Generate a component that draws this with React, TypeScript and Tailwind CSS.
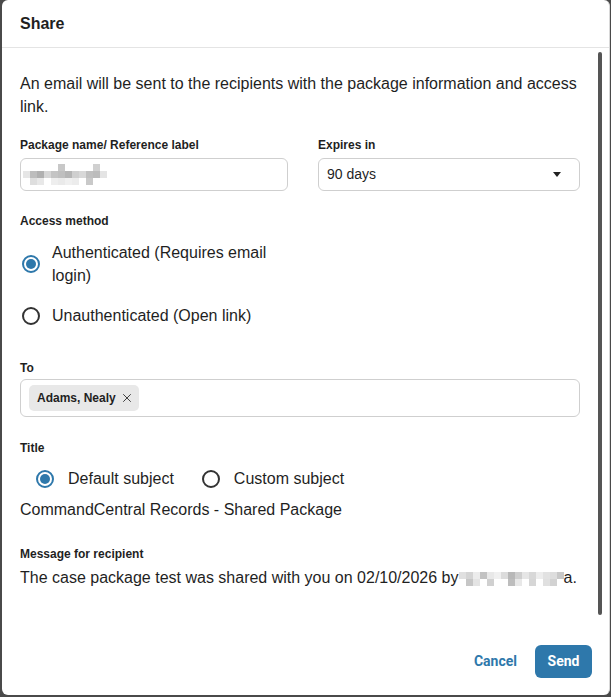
import { X } from "lucide-react";

// Share dialog: package details, access method, recipients, subject and message.

const BLUE = "#2e78ab";

function Radio({ checked }: { checked?: boolean }) {
  return checked ? (
    <span className="flex h-[18px] w-[18px] shrink-0 items-center justify-center rounded-full border-2 border-[#2e78ab] bg-white">
      <span className="h-[10px] w-[10px] rounded-full bg-[#2e78ab]" />
    </span>
  ) : (
    <span className="block h-[18px] w-[18px] shrink-0 rounded-full border-2 border-[#333] bg-white" />
  );
}

// Pixel mosaic used for redacted values.
function Mosaic({ cells }: { cells: string[][] }) {
  return (
    <span className="inline-flex flex-col align-middle">
      {cells.map((row, r) => (
        <span key={r} className="flex">
          {row.map((c, i) => (
            <span key={i} className="h-[7px] w-[7px]" style={{ backgroundColor: c }} />
          ))}
        </span>
      ))}
    </span>
  );
}

const W = "#ffffff";
const nameCells = [
  [W, W, W, W, W, "#c8c8c8", W, W, W, W, "#d0d0d0", W],
  ["#e6e6e6", "#bdbdbd", "#b0b0b0", "#d6d6d6", "#c4c4c4", "#bfbfbf", "#b5b5b5", "#cfcfcf", "#d8d8d8", "#c0c0c0", "#bcbcbc", "#e4e4e4"],
  [W, "#dedede", "#e8e8e8", W, "#eeeeee", "#eaeaea", "#f0f0f0", "#ececec", W, "#c9c9c9", W, W],
];

const byCells = [
  ["#e0e0e0", "#d4d4d4", "#ececec", "#c2c2c2", "#e8e8e8", "#f0f0f0", "#dcdcdc", "#b8b8b8", "#cfcfcf", "#e6e6e6", "#d8d8d8", "#ededed", "#e2e2e2", "#dddddd", "#c8c8c8"],
  [W, "#c6c6c6", "#e4e4e4", W, "#d0d0d0", W, W, "#bdbdbd", "#e8e8e8", W, "#d6d6d6", W, "#e0e0e0", "#d2d2d2", W],
];

export default function App() {
  return (
    <div className="h-[697px] w-[611px] bg-[#4a4a4a] pl-[2px] font-['Liberation_Sans',Arial,sans-serif] text-[#1f1f1f]">
      <div className="relative flex h-[695px] w-[608px] flex-col rounded-[6px] border-r border-[#d8d8d8] bg-white">
        <header className="flex h-[48px] shrink-0 items-center border-b border-[#e4e4e4] px-[18px]">
          <h1 className="text-[16px] font-bold">Share</h1>
        </header>

        <div className="flex-1 px-[18px] pt-[24px]">
          <p className="text-[16px] leading-[23px]">
            An email will be sent to the recipients with the package information and access link.
          </p>

          <div className="mt-[19px] grid grid-cols-[268px_262px] gap-x-[30px]">
            <div>
              <label className="block text-[12px] font-bold leading-[16px]">
                Package name/ Reference label
              </label>
              <div className="mt-[5px] flex h-[33px] items-center rounded-[6px] border border-[#cfcfcf] pl-[2px]">
                <Mosaic cells={nameCells} />
              </div>
            </div>
            <div>
              <label className="block text-[12px] font-bold leading-[16px]">Expires in</label>
              <div className="mt-[5px] flex h-[33px] items-center justify-between rounded-[6px] border border-[#cfcfcf] pl-[8px] pr-[18px] text-[14px]">
                <span>90 days</span>
                <svg width="8" height="5" viewBox="0 0 8 5">
                  <path d="M0 0h8L4 5z" fill="#222" />
                </svg>
              </div>
            </div>
          </div>

          <label className="mt-[22px] block text-[12px] font-bold leading-[16px]">Access method</label>
          <div className="mt-[12px] w-[268px]">
            <div className="flex items-center gap-[12px] pl-[2px]">
              <Radio checked />
              <span className="text-[16px] leading-[23px]">Authenticated (Requires email login)</span>
            </div>
            <div className="mt-[17px] flex items-center gap-[12px] pl-[2px]">
              <Radio />
              <span className="text-[16px] leading-[23px]">Unauthenticated (Open link)</span>
            </div>
          </div>

          <label className="mt-[33px] block text-[12px] font-bold leading-[16px]">To</label>
          <div className="mt-[3px] flex h-[38px] w-[560px] items-center rounded-[6px] border border-[#cfcfcf] px-[8px]">
            <span className="flex h-[26px] items-center gap-[4px] rounded-[5px] bg-[#e8e8e8] pl-[8px] pr-[5px] text-[12px] font-bold">
              Adams, Nealy
              <X size={14} strokeWidth={1.6} className="text-[#333]" />
            </span>
          </div>

          <label className="mt-[23px] block text-[12px] font-bold leading-[16px]">Title</label>
          <div className="mt-[11px] flex items-center pl-[16px] text-[16px] leading-[23px]">
            <Radio checked />
            <span className="ml-[14px]">Default subject</span>
            <span className="ml-[28px] flex">
              <Radio />
            </span>
            <span className="ml-[14px]">Custom subject</span>
          </div>

          <p className="mt-[8px] text-[16px] leading-[23px]">CommandCentral Records - Shared Package</p>

          <label className="mt-[25px] block text-[12px] font-bold leading-[16px]">
            Message for recipient
          </label>
          <p className="mt-[4px] text-[16px] leading-[23px]">
            The case package test was shared with you on 02/10/2026 by
            <Mosaic cells={byCells} />
            a.
          </p>
        </div>

        <footer className="flex h-[66px] shrink-0 items-start justify-end gap-[18px] pr-[17px] pt-[16px] font-['Roboto',sans-serif]">
          <button className="mt-[8px] text-[14px] font-bold leading-[17px]" style={{ color: BLUE }}>
            Cancel
          </button>
          <button className="h-[33px] w-[57px] rounded-[6px] text-[14px] font-bold text-white" style={{ backgroundColor: BLUE }}>
            Send
          </button>
        </footer>

        {/* scroll thumb for the body */}
        <div className="absolute right-[7px] top-[52px] h-[563px] w-[4px] rounded-full bg-[#555]" />
      </div>
    </div>
  );
}
